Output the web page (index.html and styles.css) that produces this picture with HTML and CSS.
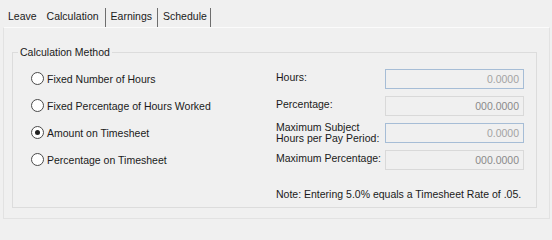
FILE: index.html
```html
<!DOCTYPE html>
<html>
<head>
<meta charset="utf-8">
<link rel="stylesheet" href="styles.css">
</head>
<body>
<div class="tabs">
  <span class="tab">Leave</span>
  <span class="tab sel">Calculation</span>
  <span class="tab sep">Earnings</span>
  <span class="tab sep">Schedule</span>
  <span class="tab sep last"></span>
</div>
<div class="panel">
  <fieldset class="group">
    <legend>Calculation Method</legend>
    <div class="grid">
      <label class="radio r1"><span class="dot"></span>Fixed Number of Hours</label>
      <span class="lbl">Hours:</span>
      <span class="field blue">0.0000</span>

      <label class="radio r2"><span class="dot"></span>Fixed Percentage of Hours Worked</label>
      <span class="lbl">Percentage:</span>
      <span class="field gray">000.0000</span>

      <label class="radio r3"><span class="dot on"></span>Amount on Timesheet</label>
      <span class="lbl two">Maximum Subject<br>Hours per Pay Period:</span>
      <span class="field blue">0.0000</span>

      <label class="radio r4"><span class="dot"></span>Percentage on Timesheet</label>
      <span class="lbl">Maximum Percentage:</span>
      <span class="field gray">000.0000</span>

      <span class="note">Note: Entering 5.0% equals a Timesheet Rate of .05.</span>
    </div>
  </fieldset>
</div>
</body>
</html>
```
FILE: styles.css
```css
html, body {
  margin: 0;
  padding: 0;
  background: #f0f0f0;
}
body {
  font-family: "Liberation Sans", Arial, sans-serif;
  font-size: 10.5px;
  color: #1a1a1a;
  width: 552px;
  height: 221px;
  overflow: hidden;
}
.tabs {
  display: flex;
  align-items: stretch;
  height: 19px;
  padding: 8px 0 0 3px;
}
.tab {
  display: flex;
  align-items: center;
  padding: 0 5px 2px 5px;
  line-height: 13px;
  white-space: nowrap;
}
.tab.sel {
  padding: 0 6px 2px 5px;
}
.tab.sep {
  border-left: 1px solid #6e6e6e;
}
.tab.sep + .tab.sep {
  padding-right: 3px;
}
.tab.last {
  padding: 0;
  width: 0;
}
.panel {
  margin: 0 2px 0 3px;
  height: 192px;
  box-sizing: border-box;
  border-top: 1px solid #fbfbfb;
  border-left: 1px solid #e2e2e2;
  border-bottom: 1px solid #e2e2e2;
  border-right: 1px solid #e2e2e2;
  padding: 18px 12px 0 8px;
}
.group {
  margin: 0;
  padding: 0 0 0 18px;
  border: 1px solid #dcdcdc;
  height: 162px;
  box-sizing: border-box;
  min-width: 0;
}
.group legend {
  padding: 0 2px;
  margin-left: -13px;
  line-height: 13px;
}
.grid {
  display: grid;
  grid-template-columns: 245px 109px 139px;
  grid-template-rows: repeat(4, 27px) 28px;
  margin-top: 6px;
  white-space: nowrap;
}
.radio {
  display: flex;
  align-items: center;
  gap: 3px;
}
.dot {
  width: 11px;
  height: 11px;
  border: 1px solid #4a4a4a;
  border-radius: 50%;
  background: #ffffff;
  display: flex;
  align-items: center;
  justify-content: center;
  flex: none;
}
.dot.on::after {
  content: "";
  width: 5px;
  height: 5px;
  border-radius: 50%;
  background: #202020;
}
.lbl {
  display: flex;
  align-items: center;
  line-height: 11px;
  margin-top: -3px;
}
.lbl.two {
  margin-top: 0;
}
.field {
  align-self: center;
  height: 20px;
  box-sizing: border-box;
  background: #f0f0f0;
  text-align: right;
  padding-right: 4px;
  line-height: 18px;
}
.field.blue {
  border: 1px solid #a6bdd6;
  color: #a3a3a3;
}
.field.gray {
  border: 1px solid #d9d9d9;
  color: #8a8a8a;
}
.note {
  grid-column: 2 / 4;
  align-self: end;
  line-height: 13px;
}
```
